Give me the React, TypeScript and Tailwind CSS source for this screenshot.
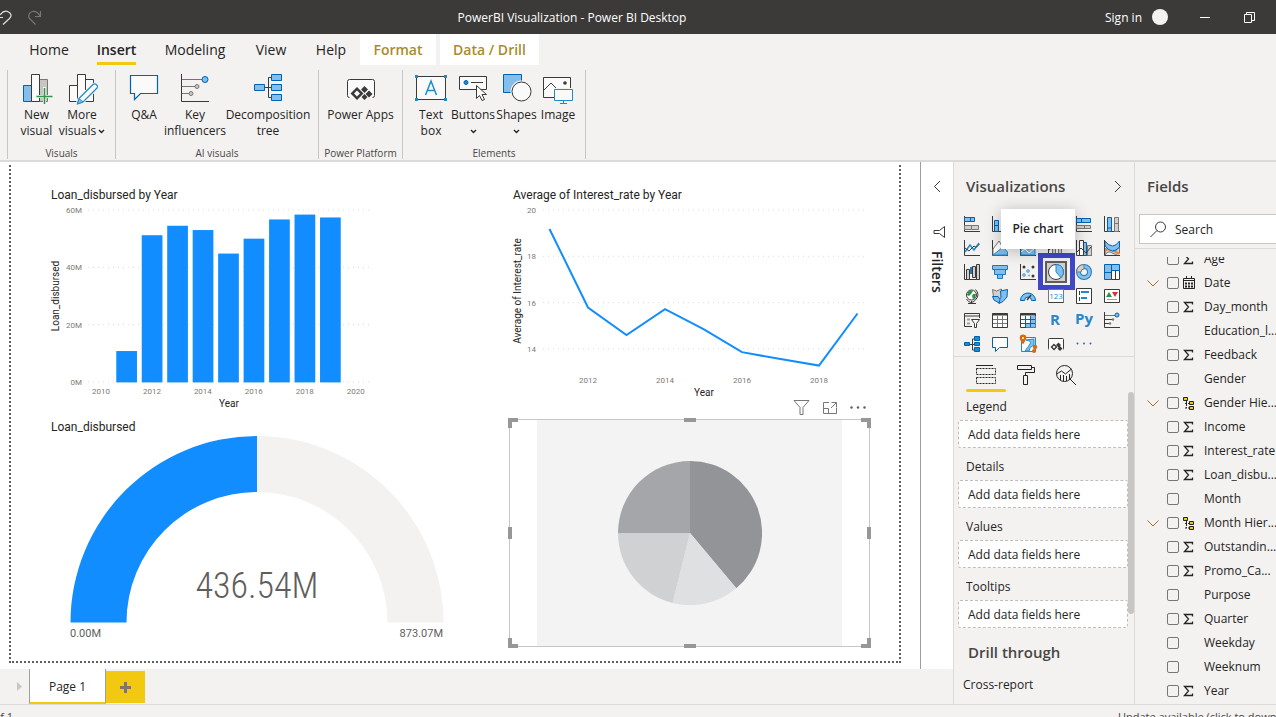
import type { ReactNode } from 'react';

const BLUE = '#118dff';

/* ---------- ribbon icons, 32 x 32 ---------- */

function RibbonIcon({ children }: { children: ReactNode }) {
  return (
    <svg width="32" height="32" viewBox="0 0 32 32" fill="none" aria-hidden="true" className="shrink-0">
      {children}
    </svg>
  );
}

const newVisualIcon = (
  <RibbonIcon>
    <path d="M18.5 6.500h8v22h-8z" fill="#c8c6c4" stroke="#797775" />
    <path d="M2.500 12.500h8v16h-8z" fill="#83beec" stroke="#0063b1" />
    <path d="M10.500 1.500h8v27h-8z" fill="#fafafa" stroke="#3b3a39" />
    <path d="M23.500 14v17M15 23.500h17" stroke="#f3f2f1" strokeWidth="3" />
    <path d="M23.500 15v16M15.500 23.500h16" stroke="#2b9a46" strokeWidth="1.500" />
  </RibbonIcon>
);

const moreVisualsIcon = (
  <RibbonIcon>
    <path d="M19.500 6.500h8v22h-8zM3.500 12.500h8v16h-8z" fill="#fafafa" stroke="#3b3a39" />
    <path d="M11.500 1.500h8v27h-8z" fill="#fafafa" stroke="#3b3a39" />
    <path d="M13 25.500 26.500 12q2-2 4 0t0 4L17 29l-6 2z" fill="#fafafa" stroke="#f3f2f1" strokeWidth="3" />
    <path d="M13 25.500 27 11.500q1.700-1.500 3.500.2t.3 3.600L17 29l-5.500 1.800z" fill="#fafafa" stroke="#1e8bcd" strokeWidth="1.200" />
    <path d="m13 25.500 4 3.500-5.500 2z" fill="#83beec" stroke="#1e8bcd" />
  </RibbonIcon>
);

const qaIcon = (
  <RibbonIcon>
    <path d="M2.500 2.500h27v18h-17l-6 6v-6h-4z" fill="#fafafa" stroke="#0063b1" strokeWidth="1.200" />
  </RibbonIcon>
);

const influencersIcon = (
  <RibbonIcon>
    <path d="M2.500 1v27.500H30" stroke="#3b3a39" />
    <path d="M3 6.500h20" stroke="#1e8bcd" />
    <path d="M3 13.500h13M3 20.500h7" stroke="#797775" />
    <circle cx="26" cy="6.500" r="3" fill="#83beec" stroke="#0063b1" />
    <circle cx="18" cy="13.500" r="2" fill="#c8c6c4" stroke="#797775" />
    <circle cx="12" cy="20.500" r="2" fill="#c8c6c4" stroke="#797775" />
  </RibbonIcon>
);

const decompositionIcon = (
  <RibbonIcon>
    <path d="M12 14.500h8M20 4.500h-3.500v20H20" stroke="#3b3a39" />
    <path d="M2.500 11.500h10v6h-10zM19.500 1.500h10v6h-10zM19.500 11.500h10v6h-10zM19.500 21.500h10v6h-10z" fill="#83beec" stroke="#0063b1" />
  </RibbonIcon>
);

const powerAppsIcon = (
  <RibbonIcon>
    <path d="M4.500 24.500q-2 0-2-2v-14q0-2 2-2h23q2 0 2 2v14q0 2-2 2" fill="#fafafa" stroke="#3b3a39" />
    <path d="m12 14 6.500 6.500L12 27l-6.500-6.500z" fill="#3b3a39" />
    <path d="m12 17.500 3 3-3 3-3-3z" fill="#fafafa" />
    <path d="m19.500 13 3.500 3.500-3.500 3.500-3.500-3.500zM24 17.500l3.500 3.500-3.500 3.500-3.500-3.500zM19.500 21l3 3-3 3-3-3z" fill="#3b3a39" />
  </RibbonIcon>
);

const textBoxIcon = (
  <RibbonIcon>
    <path d="M1.500 3.500h29v23h-29z" fill="#fafafa" stroke="#3b3a39" />
    <path d="M0 2h3v3H0zM29 2h3v3h-3zM0 25h3v3H0zM29 25h3v3h-3z" fill="#1e8bcd" />
    <path d="M10.500 22 16 8l5.500 14M12.500 17.500h7" stroke="#1e8bcd" strokeWidth="1.500" />
  </RibbonIcon>
);

const buttonsIcon = (
  <RibbonIcon>
    <path d="M2.500 3.500h27v13h-27z" fill="#fafafa" stroke="#3b3a39" />
    <circle cx="9" cy="9.500" r="2" fill="#1e8bcd" stroke="#0063b1" />
    <path d="M14 9.500h12" stroke="#3b3a39" />
    <path d="M19.500 12.500v13l3-3 2.500 5 2.500-1-2.500-5h4.500z" fill="#fafafa" stroke="#3b3a39" />
  </RibbonIcon>
);

const shapesIcon = (
  <RibbonIcon>
    <path d="M2.500 1.500h18v18h-18z" fill="#83beec" stroke="#0063b1" />
    <circle cx="20.500" cy="18.500" r="11" fill="#f3f2f1" />
    <circle cx="20.500" cy="18.500" r="9.500" fill="#fafafa" stroke="#3b3a39" />
  </RibbonIcon>
);

const imageIcon = (
  <RibbonIcon>
    <path d="M1.500 4.500h27v20h-27z" fill="#fafafa" stroke="#3b3a39" />
    <path d="m2 17 7-7 7 7" stroke="#3b3a39" />
    <circle cx="23" cy="10" r="1.800" fill="#3b3a39" />
    <path d="M12 15h20v16H12z" fill="#f3f2f1" />
    <path d="M12.500 16.500h18v11h-18z" fill="#fafafa" stroke="#1e8bcd" />
    <path d="M21.500 28v3M18 30.500h7" stroke="#1e8bcd" />
  </RibbonIcon>
);

type Tool = { lines: string[]; icon: ReactNode; width: string; caret?: 'inline' | 'below' };
type Group = { name: string; width: string; pad: string; tools: Tool[] };

const groups: Group[] = [
  {
    name: 'Visuals',
    width: 'w-[109px]',
    pad: 'pl-1.5',
    tools: [
      { lines: ['New', 'visual'], icon: newVisualIcon, width: 'w-[45px]' },
      { lines: ['More', 'visuals'], icon: moreVisualsIcon, width: 'w-[46px]', caret: 'inline' },
    ],
  },
  {
    name: 'AI visuals',
    width: 'w-[203px]',
    pad: 'pl-2',
    tools: [
      { lines: ['Q&A'], icon: qaIcon, width: 'w-[40px]' },
      { lines: ['Key', 'influencers'], icon: influencersIcon, width: 'w-[62px]' },
      { lines: ['Decomposition', 'tree'], icon: decompositionIcon, width: 'w-[84px]' },
    ],
  },
  {
    name: 'Power Platform',
    width: 'w-[84px]',
    pad: 'pl-0',
    tools: [{ lines: ['Power Apps'], icon: powerAppsIcon, width: 'w-[83px]' }],
  },
  {
    name: 'Elements',
    width: 'w-[183px]',
    pad: 'pl-2',
    tools: [
      { lines: ['Text', 'box'], icon: textBoxIcon, width: 'w-[40px]' },
      { lines: ['Buttons'], icon: buttonsIcon, width: 'w-[44px]', caret: 'below' },
      { lines: ['Shapes'], icon: shapesIcon, width: 'w-[43px]', caret: 'below' },
      { lines: ['Image'], icon: imageIcon, width: 'w-[40px]' },
    ],
  },
];

function Caret() {
  return (
    <svg width="7" height="5" viewBox="0 0 7 5" className="inline-block" fill="none" aria-hidden="true">
      <path d="m1 1 2.500 2.500L6 1" stroke="#252423" strokeWidth="1.400" />
    </svg>
  );
}

function TitleBar() {
  return (
    <header className="flex h-[34px] shrink-0 items-center bg-[#3b3a39] text-xs text-white">
      <div className="flex w-[52px] items-center gap-4">
        <button aria-label="Undo">
          <svg width="12" height="16" viewBox="0 0 12 16" fill="none">
            <path d="M-3 8.500h6M0 6q4-5.500 8.500-3t1 6.500L3 15.500" stroke="#e1dfdd" strokeWidth="1.200" />
          </svg>
        </button>
        <button aria-label="Redo">
          <svg width="15" height="16" viewBox="0 0 15 16" fill="none">
            <path d="M12.500 2v5.500H7M12 7Q9 1.500 4.500 2.500T1 9L7.500 15.500" stroke="#797775" strokeWidth="1.200" />
          </svg>
        </button>
      </div>
      <h1 className="flex-1 pt-0.5 text-center">PowerBI Visualization - Power BI Desktop</h1>
      <div className="flex w-[184px] items-center pl-[13px]">
        <button className="pt-0.5">Sign in</button>
        <span className="ml-2.5 size-4 rounded-full bg-[#f3f2f1]" />
        <button aria-label="Minimize" className="ml-8">
          <svg width="10" height="10" viewBox="0 0 10 10">
            <path d="M0 5.500h10" stroke="#fff" />
          </svg>
        </button>
        <button aria-label="Restore" className="ml-[34px]">
          <svg width="11" height="11" viewBox="0 0 11 11" fill="none" stroke="#fff">
            <path d="M.5 2.500h7v8h-7zM2.500 2.500v-2h8v8h-3" />
          </svg>
        </button>
      </div>
    </header>
  );
}

const tabs = [
  { name: 'Home', width: 'w-[68px]' },
  { name: 'Insert', width: 'w-[67px]' },
  { name: 'Modeling', width: 'w-[90px]' },
  { name: 'View', width: 'w-[62px]' },
  { name: 'Help', width: 'w-[58px]' },
];

function Tabs() {
  return (
    <nav className="flex h-[31px] shrink-0 pl-[15px] text-sm">
      {tabs.map((t) => (
        <button key={t.name} className={`flex justify-center ${t.width}`}>
          <span
            className={`h-full border-b-3 leading-8 ${
              t.name === 'Insert' ? 'border-[#f2c811] font-semibold' : 'border-transparent'
            }`}
          >
            {t.name}
          </span>
        </button>
      ))}
      <button className="w-[76px] bg-white font-semibold text-[#a98b2b]">Format</button>
      <button className="ml-1 w-[99px] bg-white font-semibold text-[#a98b2b]">Data / Drill</button>
    </nav>
  );
}

function Ribbon() {
  return (
    <section className="flex h-[97px] shrink-0 border-b-2 border-[#dcdad8] pt-[5px] pb-px pl-[7px]">
      {groups.map((g, i) => (
        <div
          key={g.name}
          className={`flex flex-col justify-between border-[#c8c6c4] ${i === 0 ? 'border-x' : 'border-r'} ${g.width}`}
        >
          <div className={`flex pt-[3px] ${g.pad}`}>
            {g.tools.map((t) => (
              <button key={t.lines.join(' ')} className={`flex flex-col items-center ${t.width}`}>
                <span className="pb-0.5">{t.icon}</span>
                {t.lines.map((l, n) => (
                  <span key={l} className="text-xs leading-4 whitespace-nowrap">
                    {l}
                    {t.caret === 'inline' && n === 1 && (
                      <span className="ml-0.5">
                        <Caret />
                      </span>
                    )}
                  </span>
                ))}
                {t.caret === 'below' && (
                  <span className="text-xs leading-4">
                    <Caret />
                  </span>
                )}
              </button>
            ))}
          </div>
          <h2 className="text-center text-[10px] leading-3 whitespace-nowrap text-[#484644]">{g.name}</h2>
        </div>
      ))}
    </section>
  );
}

/* ---------- report visuals ---------- */

const loans = [
  [2011, 10.8],
  [2012, 51.2],
  [2013, 54.500],
  [2014, 53],
  [2015, 44.8],
  [2016, 50],
  [2017, 56.7],
  [2018, 58.400],
  [2019, 57.400],
];

function BarChart() {
  const x = (year: number) => 61 + (year - 2010) * 25.47;
  const y = (v: number) => 180 - (v * 172) / 60;
  return (
    <svg width="345" height="210" viewBox="0 0 345 210" className="font-['Roboto',sans-serif]">
      {[0, 20, 40, 60].map((v) => (
        <g key={v}>
          <path d={`M48 ${y(v)}H330`} stroke="#dddbd9" strokeDasharray="1 4" />
          <text x="42" y={y(v) + 3} textAnchor="end" fontSize="8" fill="#7c7a78">{`${v}M`}</text>
        </g>
      ))}
      {loans.map(([year, v]) => (
        <rect key={year} x={x(year) - 10.2} y={y(v)} width="20.700" height={180.400 - y(v)} fill={BLUE} />
      ))}
      {[2010, 2012, 2014, 2016, 2018, 2020].map((year) => (
        <text key={year} x={x(year)} y="192" textAnchor="middle" fontSize="8" fill="#7c7a78">
          {year}
        </text>
      ))}
      <g fontSize="10" fill="#252423">
        <text x="189" y="205" textAnchor="middle">Year</text>
        <text transform="translate(19 94) rotate(-90)" textAnchor="middle">Loan_disbursed</text>
      </g>
    </svg>
  );
}

const rates = [
  [2011, 19.18],
  [2012, 15.79],
  [2013, 14.600],
  [2014, 15.72],
  [2015, 14.85],
  [2016, 13.86],
  [2017, 13.56],
  [2018, 13.28],
  [2019, 15.53],
];

function LineChart() {
  const x = (year: number) => 86 + (year - 2012) * 38.5;
  const y = (v: number) => 8 + (20 - v) * 23.15;
  return (
    <svg width="375" height="201" viewBox="0 0 375 201" className="font-['Roboto',sans-serif]">
      {[14, 16, 18, 20].map((v) => (
        <g key={v}>
          <path d={`M41 ${y(v)}H363`} stroke="#dddbd9" strokeDasharray="1 4" />
          <text x="34" y={y(v) + 3} textAnchor="end" fontSize="8" fill="#7c7a78">
            {v}
          </text>
        </g>
      ))}
      <polyline
        points={rates.map(([year, v]) => `${x(year)},${y(v)}`).join(' ')}
        fill="none"
        stroke={BLUE}
        strokeWidth="2"
      />
      {[2012, 2014, 2016, 2018].map((year) => (
        <text key={year} x={x(year)} y="181" textAnchor="middle" fontSize="8" fill="#7c7a78">
          {year}
        </text>
      ))}
      <g fontSize="10" fill="#252423">
        <text x="202" y="194" textAnchor="middle">Year</text>
        <text transform="translate(19 89) rotate(-90)" textAnchor="middle">Average of Interest_rate</text>
      </g>
    </svg>
  );
}

function Gauge() {
  return (
    <svg width="420" height="210" viewBox="0 8 420 210">
      <path d="M217 10A186.500 186.500 0 0 1 403.500 196.500H347.500A130.500 130.500 0 0 0 217 66z" fill="#f3f2f1" />
      <path d="M217 10A186.500 186.500 0 0 0 30.500 196.500H86.500A130.500 130.500 0 0 1 217 66z" fill={BLUE} />
      <text
        x="217"
        y="172"
        textAnchor="middle"
        fontSize="36"
        fill="#605e5c"
        className="font-['Roboto_Condensed','Liberation_Sans_Narrow','Roboto',sans-serif] font-light"
      >
        436.54M
      </text>
      <g className="font-['Roboto',sans-serif]" fontSize="11" fill="#605e5c">
        <text x="30" y="211">0.00M</text>
        <text x="403" y="211" textAnchor="end">873.07M</text>
      </g>
    </svg>
  );
}

function PiePlaceholder() {
  return (
    <div className="relative flex h-[228px] w-[361px] items-center justify-center border border-[#c8c6c4]">
      <div className="flex h-full w-[305px] items-center justify-center bg-[#f3f3f3]">
        <svg width="144" height="144" viewBox="-72 -72 144 144">
          <path d="M0 0V-72A72 72 0 0 1 46.300 55.200z" fill="#939498" />
          <path d="M0 0 46.300 55.200A72 72 0 0 1-17.400 69.900z" fill="#dfe0e2" />
          <path d="M0 0-17.400 69.900A72 72 0 0 1-72 0z" fill="#d0d1d3" />
          <path d="M0 0H-72A72 72 0 0 1 0-72z" fill="#a5a6aa" />
        </svg>
      </div>
      <span className="absolute -top-0.5 -left-0.5 size-2.5 border-t-4 border-l-4 border-[#979797]" />
      <span className="absolute -top-0.5 -right-0.5 size-2.5 border-t-4 border-r-4 border-[#979797]" />
      <span className="absolute -bottom-0.5 -left-0.5 size-2.5 border-b-4 border-l-4 border-[#979797]" />
      <span className="absolute -right-0.5 -bottom-0.5 size-2.5 border-r-4 border-b-4 border-[#979797]" />
      <span className="absolute -top-0.5 left-1/2 h-1 w-3 -translate-x-1/2 bg-[#979797]" />
      <span className="absolute -bottom-0.5 left-1/2 h-1 w-3 -translate-x-1/2 bg-[#979797]" />
      <span className="absolute top-1/2 -left-0.5 h-3 w-1 -translate-y-1/2 bg-[#979797]" />
      <span className="absolute top-1/2 -right-0.5 h-3 w-1 -translate-y-1/2 bg-[#979797]" />
    </div>
  );
}

function VisualTitle({ children }: { children: ReactNode }) {
  return <h3 className="pl-[11px] font-['Roboto',sans-serif] text-xs leading-[14px] text-[#252423]">{children}</h3>;
}

function Canvas() {
  return (
    <div className="min-w-0 flex-1 overflow-hidden bg-white pt-[3px] pr-[19px] pb-1.5 pl-[9px]">
      <div className="grid h-full grid-cols-[469px_1fr] grid-rows-[234px_1fr] border-2 border-t-0 border-dotted border-[#605e5c] pl-[29px]">
        <article className="pt-[23px]">
          <VisualTitle>Loan_disbursed by Year</VisualTitle>
          <BarChart />
        </article>
        <article className="-ml-[7px] pt-[23px]">
          <VisualTitle>Average of Interest_rate by Year</VisualTitle>
          <LineChart />
        </article>
        <article className="pt-[21px]">
          <VisualTitle>Loan_disbursed</VisualTitle>
          <Gauge />
        </article>
        <article>
          <div className="flex h-5 w-[361px] items-start justify-end gap-3 pr-1">
            <button aria-label="Filters on this visual">
              <svg width="17" height="17" viewBox="0 0 17 17" fill="none">
                <path d="M1 1.500h15l-6 7v7H7v-7z" stroke="#797775" />
              </svg>
            </button>
            <button aria-label="Focus mode">
              <svg width="16" height="17" viewBox="0 0 16 17" fill="none" stroke="#797775">
                <path d="M7 3.500H1.500v11h13V9M9.500 3.500h5v5M14 4 9 9M1.500 9.500h5v5" />
              </svg>
            </button>
            <button aria-label="More options">
              <svg width="16" height="17" viewBox="0 0 16 17" fill="#605e5c">
                <circle cx="1.500" cy="8.500" r="1.200" />
                <circle cx="8" cy="8.500" r="1.200" />
                <circle cx="14.500" cy="8.500" r="1.200" />
              </svg>
            </button>
          </div>
          <PiePlaceholder />
        </article>
      </div>
    </div>
  );
}

function FiltersPane() {
  return (
    <aside className="flex w-[33px] shrink-0 flex-col items-center border-l border-[#a19f9d] bg-white pt-[18px]">
      <button aria-label="Expand filters">
        <svg width="8" height="13" viewBox="0 0 8 13" fill="none">
          <path d="m7 1-5.500 5.500L7 12" stroke="#3b3a39" />
        </svg>
      </button>
      <svg width="13" height="14" viewBox="0 0 13 14" fill="none" className="mt-8 ml-1" aria-hidden="true">
        <path d="M11.500 1.500v11L6.500 8.500H1v-3h5.500z" stroke="#3b3a39" />
      </svg>
      <h2 className="mt-3 text-sm leading-5 font-semibold [writing-mode:vertical-rl]">Filters</h2>
    </aside>
  );
}

/* ---------- visualization gallery, 16 x 16 icons ---------- */

const axis = <path d="M.5 0v15.500H16" stroke="#3b3a39" />;

const gallery: { name: string; art: ReactNode }[] = [
  {
    name: 'Stacked bar chart',
    art: (
      <>
        {axis}
        <path d="M.5 1.500h6v4h-6zM6.500 1.500h4v4h-4z" fill="#83beec" stroke="#0063b1" />
        <path d="M.5 9.500h7v4h-7zM7.500 9.500h7v4h-7z" fill="#d2d0ce" stroke="#797775" />
      </>
    ),
  },
  {
    name: 'Stacked column chart',
    art: (
      <>
        {axis}
        <path d="M2.500 4.500h4v11h-4zM2.500 9.500h4" fill="#83beec" stroke="#0063b1" />
        <path d="M9.500 1.500h4v14h-4z" fill="#d2d0ce" stroke="#797775" />
      </>
    ),
  },
  {
    name: 'Clustered bar chart',
    art: (
      <>
        {axis}
        <path d="M.5 2.500h10v4H.5z" fill="#83beec" stroke="#0063b1" />
        <path d="M.5 8.500h13v4H.5z" fill="#d2d0ce" stroke="#797775" />
      </>
    ),
  },
  {
    name: 'Clustered column chart',
    art: (
      <>
        {axis}
        <path d="M3.500 6.500h4v9h-4z" fill="#83beec" stroke="#0063b1" />
        <path d="M9.500 2.500h4v13h-4z" fill="#d2d0ce" stroke="#797775" />
      </>
    ),
  },
  {
    name: '100% stacked bar chart',
    art: (
      <>
        {axis}
        <path d="M.5 2.500h14v4H.5zM5.500 2.500v4" fill="#83beec" stroke="#0063b1" />
        <path d="M.5 9.500h14v3H.5zM8.500 9.500v3" fill="#d2d0ce" stroke="#797775" />
      </>
    ),
  },
  {
    name: '100% stacked column chart',
    art: (
      <>
        {axis}
        <path d="M3.500 1.500h4v14h-4zM3.500 12h4" fill="#83beec" stroke="#0063b1" />
        <path d="M10.500 1.500h4v14h-4zM10.500 7.500h4" fill="#d2d0ce" stroke="#797775" />
      </>
    ),
  },
  {
    name: 'Line chart',
    art: (
      <>
        {axis}
        <path d="m1 12 5-7 4 5 5-7" stroke="#1e8bcd" strokeWidth="1.400" />
        <path d="m1 8 4 3 5-5 2 1.500L15.500 4" stroke="#3b3a39" />
      </>
    ),
  },
  {
    name: 'Area chart',
    art: (
      <>
        {axis}
        <path d="m1 9 6-8 8.500 14H1z" fill="#fff" stroke="#797775" />
        <path d="m1 15 10-8 4.500 5v3z" fill="#83beec" stroke="#1e8bcd" />
      </>
    ),
  },
  {
    name: 'Stacked area chart',
    art: (
      <>
        {axis}
        <path d="m1 7 4-3 4 5 6-6v12H1z" fill="#83beec" stroke="#1e8bcd" />
        <path d="m1 12 4-3 4 4 6-5" stroke="#fff" />
      </>
    ),
  },
  {
    name: 'Line and stacked column chart',
    art: (
      <>
        {axis}
        <path d="M4.500 6.500h3v9h-3zM10.500 4.500h3v11h-3z" fill="#d2d0ce" stroke="#797775" />
        <path d="m1 10 6-5 3 4 5-6" stroke="#3b3a39" />
      </>
    ),
  },
  {
    name: 'Line and clustered column chart',
    art: (
      <>
        {axis}
        <path d="M6.500 2.500h4v13h-4z" fill="#83beec" stroke="#0063b1" />
        <path d="M3.500.500h4v15h-4z" fill="#fff" stroke="#3b3a39" />
        <path d="M11.500 5.500h4v10h-4z" fill="#d2d0ce" stroke="#797775" />
        <path d="m1 12 4-4 5 5 5-6" stroke="#3b3a39" />
      </>
    ),
  },
  {
    name: 'Ribbon chart',
    art: (
      <>
        <path d="M1 9q4-4 7 0t7.500-2v6q-4 3-7.500 0T1 15z" fill="#d2d0ce" stroke="#797775" />
        <path d="M1 11q3-3 7-1t7.500 4" stroke="#e8833a" strokeWidth="2" />
        <path d="M1 1Q5 6 8.500 6T15.500 1v6Q12 11 8.500 11T1 6z" fill="#83beec" stroke="#0063b1" />
        {axis}
      </>
    ),
  },
  {
    name: 'Waterfall chart',
    art: (
      <>
        {axis}
        <path d="M2.500 5.500h3v10h-3z" fill="#d2d0ce" stroke="#3b3a39" />
        <path d="M6 3h3v7H6z" fill="#1e7bbd" />
        <path d="M8.500 2.500h3v11h-3zM12.500.500h3v15h-3z" fill="#d2d0ce" stroke="#3b3a39" />
      </>
    ),
  },
  {
    name: 'Funnel',
    art: <path d="M.5 1.500h15v4H.5zM2.500 5.500h11v5h-11zM5.500 10.500h5v4h-5z" fill="#83beec" stroke="#1e7bbd" />,
  },
  {
    name: 'Scatter chart',
    art: (
      <>
        {axis}
        <g fill="#3b3a39">
          <circle cx="4" cy="3" r="1.500" />
          <circle cx="13" cy="3" r="1.500" />
          <circle cx="13" cy="12" r="1.500" />
        </g>
        <g fill="#83beec" stroke="#1e8bcd" strokeWidth=".5">
          <circle cx="4" cy="11" r="1.500" />
          <circle cx="8" cy="7" r="1.500" />
        </g>
        <circle cx="9" cy="11.500" r="1" fill="#a19f9d" />
      </>
    ),
  },
  {
    name: 'Pie chart',
    art: (
      <>
        <circle cx="8" cy="8" r="7.500" fill="#fff" stroke="#3b3a39" />
        <path d="M8 .500A7.500 7.500 0 0 1 13 13.600L8 8z" fill="#83beec" stroke="#1e8bcd" />
      </>
    ),
  },
  {
    name: 'Donut chart',
    art: (
      <>
        <circle cx="8" cy="8" r="5.500" stroke="#1e7bbd" strokeWidth="5" />
        <circle cx="8" cy="8" r="5.500" stroke="#83beec" strokeWidth="3" />
        <path d="M.5 8A7.500 7.500 0 0 1 8 .500v4.500Q5 5 5 8z" fill="#d2d0ce" stroke="#797775" />
      </>
    ),
  },
  {
    name: 'Treemap',
    art: (
      <>
        <path d="M.5.500h7v15h-7z" fill="#83beec" stroke="#0063b1" />
        <path d="M7.500 6.500h8v9h-8zM11.500 6.500v9" fill="#fff" stroke="#3b3a39" />
        <path d="M7.500.500h8v6h-8zM.5 8.500h7" fill="#83beec" stroke="#0063b1" />
      </>
    ),
  },
  {
    name: 'Map',
    art: (
      <>
        <circle cx="7.500" cy="7" r="5" fill="#fff" stroke="#3b3a39" />
        <path d="M4 4q3-3 5-1L7 6 5 8 3 7zM9 6l3 0-1 4-2 1-1-3z" fill="#309048" />
        <path d="M11.500 1.500q5 5 0 10.500t-9-1M7.500 13v2.500M4 15.500h8" stroke="#3b3a39" />
      </>
    ),
  },
  {
    name: 'Filled map',
    art: (
      <>
        <path d="m.5 1.500 4 1.500 5-2 1 6-3 6-6-4z" fill="#d2d0ce" stroke="#797775" />
        <path d="m8.500 3 7-1.500-.5 7.500-4 4.500-4 2-1-3 3-3z" fill="#83beec" stroke="#0063b1" />
        <path d="m.5 8.500 5.500 0 2 3-1 3.500-5-3z" fill="#83beec" stroke="#0063b1" />
      </>
    ),
  },
  {
    name: 'Gauge',
    art: (
      <>
        <path d="M.5 12.500a7.500 7.500 0 0 1 15 0h-4a3.500 3.500 0 0 0-7 0z" fill="#83beec" stroke="#0063b1" />
        <path d="m7 12 4-5" stroke="#3b3a39" strokeWidth="1.500" />
      </>
    ),
  },
  {
    name: 'Card',
    art: (
      <>
        <path d="M.5 1.500h15v13H.5z" fill="#fff" stroke="#797775" />
        <path d="M.5 14.500h15" stroke="#3b3a39" />
        <text x="8" y="11" textAnchor="middle" fontSize="8" fill="#1e8bcd">123</text>
      </>
    ),
  },
  {
    name: 'Multi-row card',
    art: (
      <>
        <path d="M.5.500h15v15H.5z" fill="#fff" stroke="#3b3a39" />
        <path d="M3.500 3v4M3.500 9v4" stroke="#3b3a39" />
        <path d="M5 4h8M5 10h6" stroke="#1e8bcd" strokeWidth="2" />
      </>
    ),
  },
  {
    name: 'KPI',
    art: (
      <>
        <path d="M.5 1.500h15v13H.5z" fill="#fff" stroke="#3b3a39" />
        <path d="m2 9 3-5 3 5z" fill="#309048" />
        <path d="m8 4h6l-3 5z" fill="#d13438" />
        <path d="M3 11.500h10" stroke="#a19f9d" />
      </>
    ),
  },
  {
    name: 'Slicer',
    art: (
      <>
        <path d="M8 14.500H.5V1.500h15V6M.5 4h15" stroke="#3b3a39" fill="none" />
        <path d="M3 6.500h3v2H3zM3 10.500h3v2H3z" fill="#a19f9d" />
        <path d="M7.500 7.500h8l-3 4v4h-2v-4z" fill="#fff" stroke="#3b3a39" />
      </>
    ),
  },
  {
    name: 'Table',
    art: (
      <>
        <path d="M.5 1.500h15v14H.5z" fill="#fff" stroke="#3b3a39" />
        <path d="M.5 2.500h15" stroke="#3b3a39" strokeWidth="2" />
        <path d="M5.500 4v11M10.500 4v11M1 7.500h14M1 11.500h14" stroke="#797775" />
      </>
    ),
  },
  {
    name: 'Matrix',
    art: (
      <>
        <path d="M.5 1.500h15v14H.5z" fill="#fff" stroke="#3b3a39" />
        <path d="M11 4h4.500v11.500H6V12h5z" fill="#83beec" />
        <path d="M.5 2.500h15" stroke="#3b3a39" strokeWidth="2" />
        <path d="M5.500 4v11M10.500 4v11M1 7.500h14M1 11.500h14" stroke="#0063b1" />
      </>
    ),
  },
  {
    name: 'R script visual',
    art: (
      <text x="2" y="13" fontSize="15" fontWeight="700" fill="#2a86c8">R</text>
    ),
  },
  {
    name: 'Python visual',
    art: (
      <text x="-1" y="12" fontSize="15" fontWeight="700" fill="#2a86c8">Py</text>
    ),
  },
  {
    name: 'Key influencers',
    art: (
      <>
        {axis}
        <path d="M1 3.500h10" stroke="#1e8bcd" />
        <path d="M1 7.500h7M1 11.500h4" stroke="#3b3a39" />
        <circle cx="13" cy="3" r="2" fill="#83beec" stroke="#0063b1" />
        <circle cx="9" cy="7.500" r="1.200" fill="#797775" />
        <circle cx="6" cy="11.500" r="1.200" fill="#797775" />
      </>
    ),
  },
  {
    name: 'Decomposition tree',
    art: (
      <>
        <path d="M5 8.500h6M11 3H8.500v11H11" stroke="#3b3a39" />
        <path d="M.5 6.500h5v3h-5zM10.500.500h5v4h-5zM10.500 6.500h5v3h-5zM10.500 11.500h5v4h-5z" fill="#1e8bcd" stroke="#0063b1" />
      </>
    ),
  },
  {
    name: 'Q&A',
    art: <path d="M.5 1.500h15v10h-8l-4 4v-4h-3z" fill="#fff" stroke="#0063b1" />,
  },
  {
    name: 'ArcGIS Maps',
    art: (
      <>
        <path d="M1.500 1.500h14v14h-14z" fill="#fff" stroke="#1e8bcd" />
        <path d="M6 4q6 1 4 4t-5 7h4q0-4 5-6V3z" fill="#83beec" stroke="#1e8bcd" />
        <path d="M3-1.500a3.300 3.300 0 0 1 3.300 3.300q0 2.200-3.300 6.700Q-.3 4-.3 1.800A3.300 3.300 0 0 1 3-1.500z" fill="#d96b0b" />
        <circle cx="3" cy="2" r="1" fill="#fff" />
        <circle cx="15" cy="11" r="2.200" fill="#d96b0b" />
        <circle cx="14" cy="15" r="2" fill="#d96b0b" />
      </>
    ),
  },
  {
    name: 'Power Apps',
    art: (
      <>
        <path d="M1 13.500q-.5 0-.5-1v-9q0-1 1-1h13q1 0 1 1v9q0 1-.5 1" fill="#fff" stroke="#3b3a39" />
        <path d="m6 7.500 3.500 3.500L6 14.500 2.500 11zM10.500 6.500 13 9l-2.500 2.500L8 9zM12 10l2.500 2.500L12 15l-2.500-2.500z" fill="#3b3a39" />
        <path d="m6 9.500 1.500 1.500L6 12.500 4.500 11z" fill="#fff" />
      </>
    ),
  },
  {
    name: 'Get more visuals',
    art: (
      <g fill="#3b68a8">
        <circle cx="1.500" cy="7.500" r="1" />
        <circle cx="8" cy="7.500" r="1" />
        <circle cx="14.500" cy="7.500" r="1" />
      </g>
    ),
  },
];

function Well({ name }: { name: string }) {
  return (
    <section className="pt-0.5 pb-1">
      <h3 className="pl-2 leading-[26px]">{name}</h3>
      <div className="h-7 rounded-xs border border-dashed border-[#c0bebc] bg-white pl-[9px] leading-7">
        Add data fields here
      </div>
    </section>
  );
}

function VisualizationsPane() {
  return (
    <aside className="flex w-[181px] shrink-0 flex-col overflow-hidden border-l border-[#dcdad8] text-xs">
      <header className="flex h-[50px] shrink-0 items-center justify-between px-3 pb-0.5">
        <h2 className="text-[15px] font-semibold text-[#484644]">Visualizations</h2>
        <button aria-label="Collapse visualizations">
          <svg width="8" height="13" viewBox="0 0 8 13" fill="none">
            <path d="m1 1 5.500 5.500L1 12" stroke="#3b3a39" />
          </svg>
        </button>
      </header>
      <div className="ml-1 grid w-[168px] shrink-0 grid-cols-6">
        {gallery.map((g) => {
          const active = g.name === 'Pie chart';
          return (
            <button key={g.name} aria-label={g.name} className="relative flex h-6 items-center justify-center">
              {active && (
                <span className="absolute -top-[7px] -left-[4px] size-[37px] border-5 border-[#4046c8] bg-[#f3f2f1]" />
              )}
              {active && <span className="absolute top-px left-[3px] size-[22px] border-2 border-[#605e5c] bg-[#d2d0ce]" />}
              <svg width="16" height="16" viewBox="0 0 16 16" fill="none" className="relative overflow-visible">
                {g.art}
              </svg>
              {active && (
                <span
                  role="tooltip"
                  className="absolute bottom-[35px] left-1/2 flex h-10 w-[74px] -translate-x-[55px] items-center justify-center bg-white text-xs font-semibold whitespace-nowrap shadow-[0_2px_16px_rgba(0,0,0,0.25)]"
                >
                  Pie chart
                </span>
              )}
            </button>
          );
        })}
      </div>
      <div className="flex h-9 shrink-0 items-start gap-[18px] border-t border-[#dcdad8] pl-3">
        <button aria-label="Fields" className="flex h-full w-10 flex-col items-center justify-between pt-2">
          <svg width="20" height="21" viewBox="0 0 20 21" fill="none" stroke="#252423">
            <path d="M0 .500h17" />
            <path d="M.5 3.500h19v6H.5zM.5 12.500h19v6H.5z" strokeDasharray="2 1" />
          </svg>
          <span className="h-[3px] w-full rounded-full bg-[#f2c811]" />
        </button>
        <button aria-label="Format" className="-ml-2 pt-2">
          <svg width="20" height="21" viewBox="0 0 20 21" fill="none" stroke="#252423">
            <path d="M1.500.500h14v4h-14zM15.500 2.500h3v5h-9v3M7.500 10.500h4v9h-4z" />
          </svg>
        </button>
        <button aria-label="Analytics" className="ml-px pt-2">
          <svg width="22" height="21" viewBox="0 0 22 21" fill="none" stroke="#252423">
            <circle cx="9.500" cy="8.500" r="8" />
            <path d="m15 14 6 6M1.500 9l5-3 4 3 6-5M5.500 10v5M8.500 10v6M11.500 11v5M14.500 9v5" />
          </svg>
        </button>
      </div>
      <div className="flex min-h-0 flex-1">
        <div className="min-w-0 flex-1 pl-1">
          {['Legend', 'Details', 'Values', 'Tooltips'].map((w) => (
            <Well key={w} name={w} />
          ))}
          <h2 className="pt-2 pl-2.5 text-[15px] leading-6 font-semibold text-[#484644]">Drill through</h2>
          <p className="pt-3 pl-[5px] leading-[18px]">Cross-report</p>
        </div>
        <div className="h-[222px] w-[6px] rounded-full bg-[#c8c6c4]" />
      </div>
    </aside>
  );
}

/* ---------- fields pane ---------- */

type Kind = 'sum' | 'date' | 'tree' | 'none';

const fields: { name: string; kind: Kind }[] = [
  { name: 'Age', kind: 'sum' },
  { name: 'Date', kind: 'date' },
  { name: 'Day_month', kind: 'sum' },
  { name: 'Education_l...', kind: 'none' },
  { name: 'Feedback', kind: 'sum' },
  { name: 'Gender', kind: 'none' },
  { name: 'Gender Hie...', kind: 'tree' },
  { name: 'Income', kind: 'sum' },
  { name: 'Interest_rate', kind: 'sum' },
  { name: 'Loan_disbu...', kind: 'sum' },
  { name: 'Month', kind: 'none' },
  { name: 'Month Hier...', kind: 'tree' },
  { name: 'Outstandin...', kind: 'sum' },
  { name: 'Promo_Ca...', kind: 'sum' },
  { name: 'Purpose', kind: 'none' },
  { name: 'Quarter', kind: 'sum' },
  { name: 'Weekday', kind: 'none' },
  { name: 'Weeknum', kind: 'none' },
  { name: 'Year', kind: 'sum' },
];

function KindIcon({ kind }: { kind: Kind }) {
  return (
    <svg width="12" height="14" viewBox="0 0 12 14" fill="none" aria-hidden="true">
      {kind === 'sum' && <path d="M9.500 4.500v-2H1.500L5.500 7l-4 4.500h8v-2" stroke="#252423" strokeWidth="1.300" />}
      {kind === 'date' && (
        <>
          <path d="M.5 2.500h11v10H.5zM.5 4.500h11M3.500 0v3M8.500 0v3" stroke="#252423" />
          <path d="M2 7.500h8M2 10.500h8" stroke="#252423" strokeWidth="1.800" strokeDasharray="2 1" />
        </>
      )}
      {kind === 'tree' && (
        <>
          <path d="M.5 1.500h4v3h-4zM6.500 5.500h4v3h-4zM6.500 10.500h4v3h-4z" fill="#f2c811" stroke="#252423" />
          <path d="M3.500 5v7M2 7.500h4M2 12h4" stroke="#252423" strokeDasharray="2 1" />
        </>
      )}
    </svg>
  );
}

function FieldsPane() {
  return (
    <aside className="flex w-[142px] shrink-0 flex-col overflow-hidden border-l border-[#dcdad8] text-xs">
      <h2 className="flex h-[50px] shrink-0 items-center pb-0.5 pl-3 text-[15px] font-semibold text-[#484644]">Fields</h2>
      <div className="h-[37px] shrink-0 border-b border-[#dcdad8] pt-0.5 pl-1">
        <label className="flex h-[30px] w-[180px] items-center gap-2 border border-[#c8c6c4] bg-white pl-2.5">
          <svg width="17" height="17" viewBox="0 0 17 17" fill="none" stroke="#3b3a39" className="shrink-0">
            <circle cx="10.500" cy="6" r="5" />
            <path d="m7 9.500-6.500 6.500" />
          </svg>
          <input
            type="search"
            aria-label="Search"
            placeholder="Search"
            className="w-20 pt-0.5 outline-none placeholder:text-[#252423]"
          />
        </label>
      </div>
      <div className="mt-2 flex min-h-0 flex-1 flex-col justify-end overflow-hidden pb-px">
        <ul>
          {fields.map((f) => (
            <li key={f.name} className="flex h-6 items-center pl-3">
              <span className="w-5 shrink-0">
                {(f.kind === 'date' || f.kind === 'tree') && (
                  <svg width="12" height="7" viewBox="0 0 12 7" fill="none" aria-hidden="true">
                    <path d="m.5.500 5.500 5.500L11.500.500" stroke="#a5722b" />
                  </svg>
                )}
              </span>
              <label className="flex shrink-0 items-center whitespace-nowrap">
                <input
                  type="checkbox"
                  className="size-3 shrink-0 appearance-none rounded-xs border border-[#797775] bg-[#f3f2f1]"
                />
                <span className="ml-1 w-[21px] shrink-0">
                  <KindIcon kind={f.kind} />
                </span>
                {f.name}
              </label>
            </li>
          ))}
        </ul>
      </div>
    </aside>
  );
}

function PageTabs() {
  return (
    <nav className="flex h-[35px] shrink-0 items-start text-xs">
      <button aria-label="Next page" className="flex h-full w-[29px] items-center justify-end pr-1.5">
        <svg width="6" height="9" viewBox="0 0 6 9">
          <path d="M0 0v9l5-4.500z" fill="#c8c6c4" />
        </svg>
      </button>
      <button className="h-full w-[77px] border-x border-b-2 border-x-[#a19f9d] border-b-[#f2c811] bg-white pt-0.5">
        Page 1
      </button>
      <button aria-label="New page" className="mt-0.5 flex h-8 w-[39px] items-center justify-center bg-[#f2c811]">
        <svg width="11" height="11" viewBox="0 0 11 11">
          <path d="M5.500 0v11M0 5.500h11" stroke="#797775" strokeWidth="3" />
        </svg>
      </button>
    </nav>
  );
}

export default function App() {
  return (
    <div className="flex h-screen flex-col overflow-hidden bg-[#f3f2f1] font-['Open_Sans','Noto_Sans',sans-serif] text-[#252423]">
      <TitleBar />
      <Tabs />
      <Ribbon />
      <main className="flex min-h-0 flex-1">
        <div className="flex min-w-0 flex-1 flex-col">
          <div className="flex min-h-0 flex-1">
            <Canvas />
            <FiltersPane />
          </div>
          <PageTabs />
        </div>
        <VisualizationsPane />
        <FieldsPane />
      </main>
      <footer className="flex h-[13px] shrink-0 justify-between overflow-hidden border-t border-[#dcdad8] text-[11px] leading-6 whitespace-nowrap text-[#484644]">
        <span className="flex w-[13px] justify-end">Page 1 of 1</span>
        <span className="w-[158px]">Update available (click to download)</span>
      </footer>
    </div>
  );
}
